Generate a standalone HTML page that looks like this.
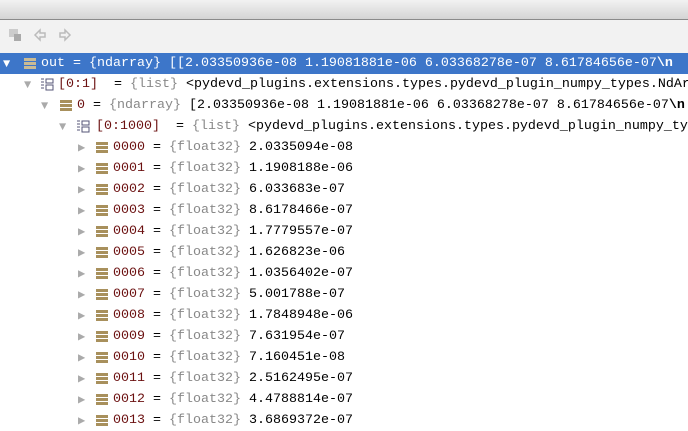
<!DOCTYPE html><html><head><style>
body{margin:0;width:688px;height:431px;overflow:hidden;background:#fff;font-family:"Liberation Mono",monospace;font-size:13.33px;position:relative}
.top{position:absolute;left:0;top:0;width:688px;height:19px;background:linear-gradient(#f2f2f2,#d4d4d4);border-bottom:1px solid #8a8a8a}
.tb{position:absolute;left:0;top:20px;width:688px;height:33px;background:#f2f2f2}
.row{position:absolute;left:0;width:688px;height:21px;line-height:21px;white-space:pre;color:#000;overflow:hidden}
.sel{background:#3d76c9;color:#fff}
.a{position:absolute;top:1px;color:#aaa;font-size:12px}
.sel .a{color:#fff}
.ic{position:absolute;top:5px;width:12px;height:11px;background:repeating-linear-gradient(#a8905c 0 3px,transparent 3px 4px)}
.sel .ic{background:repeating-linear-gradient(#c9bb95 0 3px,#3d76c9 3px 4px)}
.li{position:absolute;top:4px;width:14px;height:13px}
.t{position:absolute;top:0}
.n{color:#6b1010}.g{color:#888}
.sel .n,.sel .g{color:#fff}
</style></head><body>
<div class="top"></div>
<div class="tb">
<div style="position:absolute;left:9px;top:9px;width:9px;height:8px;background:#ccc"></div>
<div style="position:absolute;left:14px;top:14px;width:7px;height:7px;background:#aaa"></div>
<svg style="position:absolute;left:33px;top:8px" width="14" height="14"><path d="M7 2 L2 7 L7 12 V9 H12 V5 H7Z" fill="none" stroke="#bbb" stroke-width="1.5"/></svg>
<svg style="position:absolute;left:58px;top:8px" width="14" height="14"><path d="M7 2 L12 7 L7 12 V9 H2 V5 H7Z" fill="none" stroke="#bbb" stroke-width="1.5"/></svg>
</div>
<div class="row sel" style="top:53px"><span class="a" style="left:3px">▼</span><span class="ic" style="left:24px"></span><span class="t" style="left:41px">out = {ndarray} [[2.03350936e-08 1.19081881e-06 6.03368278e-07 8.61784656e-07<b>\n</b></span></div>
<div class="row" style="top:74px"><span class="a" style="left:24px">▼</span><svg class="li" style="left:40px" width="14" height="13"><path d="M1 1h3M1 4h3M1 7h3M1 10h3" stroke="#557" /><rect x="6" y="1" width="7" height="4" fill="none" stroke="#557"/><rect x="6" y="7" width="7" height="5" fill="none" stroke="#557"/></svg><span class="t" style="left:58px"><span class="n">[0:1]</span>  = <span class="g">{list}</span> &lt;pydevd_plugins.extensions.types.pydevd_plugin_numpy_types.NdArrayItemsContainer</span></div>
<div class="row" style="top:95px"><span class="a" style="left:41px">▼</span><span class="ic" style="left:60px"></span><span class="t" style="left:77px"><span class="n">0</span> = <span class="g">{ndarray}</span> [2.03350936e-08 1.19081881e-06 6.03368278e-07 8.61784656e-07<b>\n</b></span></div>
<div class="row" style="top:116px"><span class="a" style="left:59px">▼</span><svg class="li" style="left:76px" width="14" height="13"><path d="M1 1h3M1 4h3M1 7h3M1 10h3" stroke="#557" /><rect x="6" y="1" width="7" height="4" fill="none" stroke="#557"/><rect x="6" y="7" width="7" height="5" fill="none" stroke="#557"/></svg><span class="t" style="left:96px"><span class="n">[0:1000]</span>  = <span class="g">{list}</span> &lt;pydevd_plugins.extensions.types.pydevd_plugin_numpy_types</span></div>
<div id="rows"></div>
<script>
var v=["2.0335094e-08","1.1908188e-06","6.033683e-07","8.6178466e-07","1.7779557e-07","1.626823e-06","1.0356402e-07","5.001788e-07","1.7848948e-06","7.631954e-07","7.160451e-08","2.5162495e-07","4.4788814e-07","3.6869372e-07"];
var h="";for(var i=0;i<v.length;i++){var n=("000"+i).slice(-4);h+='<div class="row" style="top:'+(137+21*i)+'px"><span class="a" style="left:78px">▶</span><span class="ic" style="left:96px"></span><span class="t" style="left:113px"><span class="n">'+n+'</span> = <span class="g">{float32}</span> '+v[i]+'</span></div>';}
document.getElementById("rows").innerHTML=h;
</script>
</body></html>
